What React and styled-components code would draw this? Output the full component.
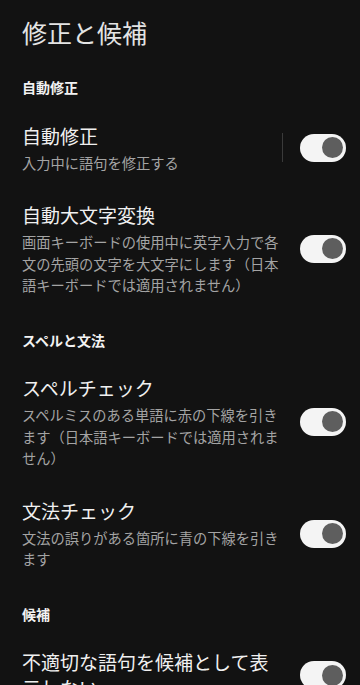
import React from "react";
import styled, { createGlobalStyle } from "styled-components";

const Global = createGlobalStyle`
  html, body {
    margin: 0;
    padding: 0;
    background: #121212;
  }
  body {
    font-family: "Noto Sans CJK JP", "Noto Sans", sans-serif;
    -webkit-font-smoothing: antialiased;
  }
`;

const Page = styled.div`
  background: #121212;
  min-height: 685px;
  padding-top: 16px;
  overflow: hidden;
`;

const PageTitle = styled.h1`
  margin: 0 0 9.5px;
  padding: 0 22px;
  font-size: 25px;
  line-height: 32px;
  font-weight: 400;
  color: #e4e4e4;
`;

const Category = styled.div`
  padding: 19.5px 22px 11px;
  font-size: 14px;
  line-height: 20px;
  font-weight: 700;
  color: #f2f2f2;
`;

const Row = styled.div`
  display: flex;
  align-items: center;
  padding: 14.5px 14px 14.5px 22px;
`;

const TextCol = styled.div`
  flex: 1;
  min-width: 0;
`;

const Title = styled.div`
  font-size: 19px;
  line-height: 26px;
  color: #f0f0f0;
`;

const Summary = styled.div`
  margin-top: 3px;
  font-size: 14.25px;
  line-height: 21.5px;
  color: #a4a4a4;
`;

const Widget = styled.div`
  width: 64px;
  flex: none;
  display: flex;
  align-items: center;
  justify-content: space-between;
`;

const Divider = styled.div`
  width: 1px;
  height: 29px;
  background: ${(p) => (p.$show ? "#3a3a3a" : "transparent")};
`;

const Track = styled.div`
  position: relative;
  width: 46px;
  height: 28px;
  border-radius: 14px;
  background: #f4f4f4;
  flex: none;
`;

const Thumb = styled.div`
  position: absolute;
  top: 3.5px;
  right: 3.5px;
  width: 21px;
  height: 21px;
  border-radius: 50%;
  background: #5e5e5e;
`;

const Switch = () => (
  <Track>
    <Thumb />
  </Track>
);

const Pref = ({ title, summary, divider }) => (
  <Row>
    <TextCol>
      <Title>{title}</Title>
      {summary && <Summary>{summary}</Summary>}
    </TextCol>
    <Widget>
      <Divider $show={divider} />
      <Switch />
    </Widget>
  </Row>
);

export default function App() {
  return (
    <>
      <Global />
      <Page>
        <PageTitle>修正と候補</PageTitle>
        <Category>自動修正</Category>
        <Pref title="自動修正" summary="入力中に語句を修正する" divider />
        <Pref
          title="自動大文字変換"
          summary="画面キーボードの使用中に英字入力で各文の先頭の文字を大文字にします（日本語キーボードでは適用されません）"
        />
        <Category>スペルと文法</Category>
        <Pref
          title="スペルチェック"
          summary="スペルミスのある単語に赤の下線を引きます（日本語キーボードでは適用されません）"
        />
        <Pref
          title="文法チェック"
          summary="文法の誤りがある箇所に青の下線を引きます"
        />
        <Category>候補</Category>
        <Pref title="不適切な語句を候補として表示しない" />
      </Page>
    </>
  );
}
